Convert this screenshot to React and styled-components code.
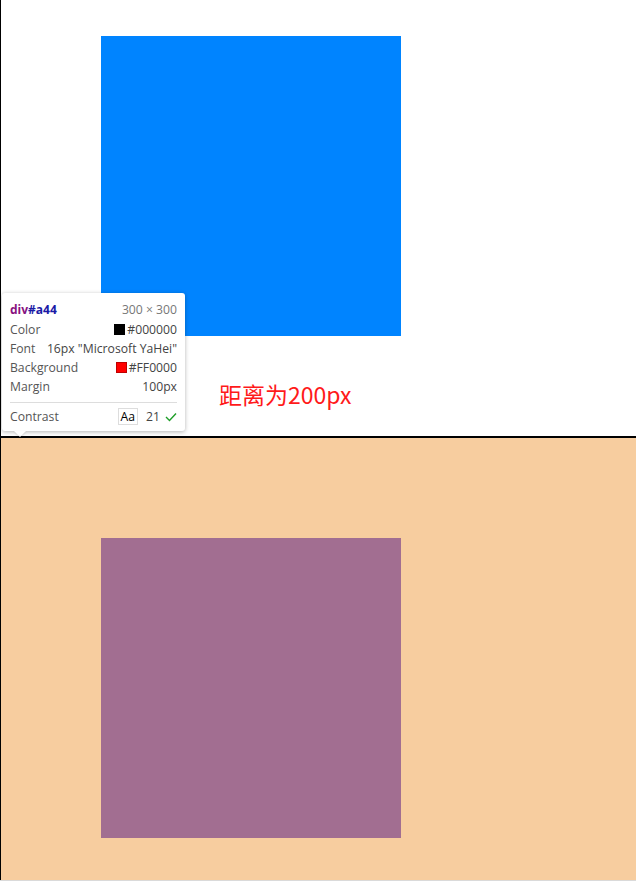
import React from "react";
import styled, { createGlobalStyle } from "styled-components";

const Global = createGlobalStyle`
  html, body { margin: 0; padding: 0; background: #fff; }
  body { font-family: "Noto Sans", "Open Sans", sans-serif; }
`;

const Page = styled.div`
  position: relative;
  width: 636px;
`;

const Section = styled.div`
  border-left: 1px solid #000;
  background: ${(p) => p.$bg};
  padding: ${(p) => p.$pad};
  height: ${(p) => p.$h}px;
  box-sizing: border-box;
  ${(p) => (p.$bottom ? "border-bottom: 1px solid #000;" : "")}
  ${(p) => (p.$top ? "border-top: 1px solid #000;" : "")}
`;

const Square = styled.div`
  width: 300px;
  height: 300px;
  background: ${(p) => p.$color};
`;

const Footer = styled.div`
  border-top: 1px solid #dadada;
  height: 6px;
  background: #fff;
`;

const Note = styled.div`
  position: absolute;
  left: 219px;
  top: 378px;
  color: #ff1a1a;
  font-family: "Microsoft YaHei", "Noto Sans CJK SC", sans-serif;
  font-size: 23px;
  line-height: 32px;
`;

const Tip = styled.div`
  position: absolute;
  left: 2px;
  top: 293px;
  width: 183px;
  box-sizing: border-box;
  background: #fff;
  border-radius: 3px;
  box-shadow: 0 1px 4px rgba(0, 0, 0, 0.3);
  padding: 6px 8px 5px;
  font-family: "Open Sans", "Noto Sans", sans-serif;
  font-size: 12.2px;
  color: #555;
  &::after {
    content: "";
    position: absolute;
    left: 12px;
    bottom: -6px;
    width: 0;
    height: 0;
    border-left: 6px solid transparent;
    border-right: 6px solid transparent;
    border-top: 6px solid #fff;
    filter: drop-shadow(0 1px 1px rgba(0, 0, 0, 0.15));
  }
`;

const Row = styled.div`
  display: flex;
  justify-content: space-between;
  align-items: center;
  height: ${(p) => p.$h || 19}px;
  white-space: nowrap;
`;

const Title = styled.span`
  font-weight: 700;
  font-size: 12px;
  color: #881280;
`;

const Id = styled.span`
  color: #1a1aa6;
`;

const Muted = styled.span`
  color: #777;
`;

const Value = styled.span`
  display: flex;
  align-items: center;
  gap: 2px;
  color: #444;
`;

const Swatch = styled.span`
  width: 9px;
  height: 9px;
  background: ${(p) => p.$c};
  border: 1px solid rgba(0, 0, 0, 0.25);
`;

const Sep = styled.div`
  height: 1px;
  background: #ddd;
  margin: 6px 0 4px;
`;

const AaBox = styled.span`
  border: 1px solid #ddd;
  padding: 0 2px;
  line-height: 15px;
  color: #000;
  margin-right: 6px;
`;

export default function App() {
  return (
    <Page>
      <Global />
      <Section $bg="#fff" $pad="36px 0 0 100px" $h={437} $bottom>
        <Square $color="#0084ff" />
      </Section>
      <Section $bg="#f7cd9f" $pad="100px 0 0 100px" $h={443} $top>
        <Square $color="#a26e91" />
      </Section>
      <Footer />
      <Note>距离为200px</Note>
      <Tip>
        <Row $h={21}>
          <Title>
            div<Id>#a44</Id>
          </Title>
          <Muted>300 × 300</Muted>
        </Row>
        <Row>
          <span>Color</span>
          <Value>
            <Swatch $c="#000" />
            #000000
          </Value>
        </Row>
        <Row>
          <span>Font</span>
          <Value>16px "Microsoft YaHei"</Value>
        </Row>
        <Row>
          <span>Background</span>
          <Value>
            <Swatch $c="#f00" />
            #FF0000
          </Value>
        </Row>
        <Row>
          <span>Margin</span>
          <Value>100px</Value>
        </Row>
        <Sep />
        <Row>
          <span>Contrast</span>
          <Value>
            <AaBox>Aa</AaBox>
            21
            <svg width="12" height="10" viewBox="0 0 12 10" style={{ marginLeft: 3 }}>
              <path d="M1 5 L4.5 8.5 L11 1.5" fill="none" stroke="#1e9e28" strokeWidth="1.4" />
            </svg>
          </Value>
        </Row>
      </Tip>
    </Page>
  );
}
